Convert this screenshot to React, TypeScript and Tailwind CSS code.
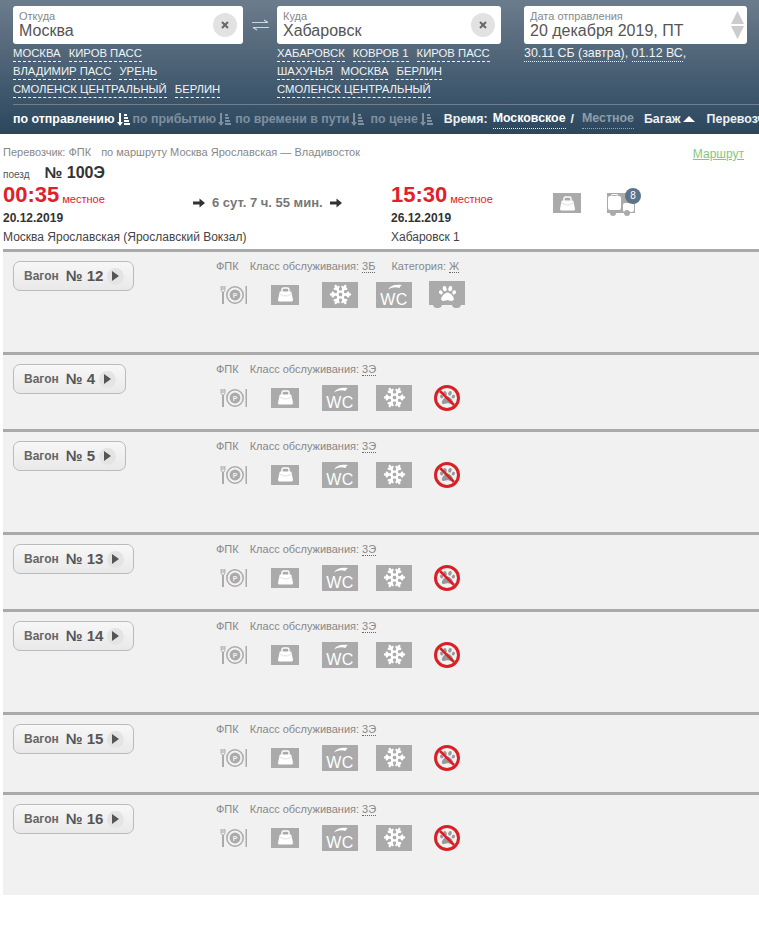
import React from 'react';
import { FaPaw } from 'react-icons/fa';
import { Snowflake } from 'lucide-react';

const fromLinks = [['МОСКВА', 'КИРОВ ПАСС'], ['ВЛАДИМИР ПАСС', 'УРЕНЬ'], ['СМОЛЕНСК ЦЕНТРАЛЬНЫЙ', 'БЕРЛИН']];
const toLinks = [['ХАБАРОВСК', 'КОВРОВ 1', 'КИРОВ ПАСС'], ['ШАХУНЬЯ', 'МОСКВА', 'БЕРЛИН'], ['СМОЛЕНСК ЦЕНТРАЛЬНЫЙ']];

function ClearButton() {
  return (
    <span className="flex h-6 w-6 items-center justify-center rounded-full bg-[#e2e2e2]">
      <svg width="8" height="8" viewBox="0 0 8 8">
        <path d="M1 1l6 6M7 1L1 7" stroke="#666" strokeWidth="2" />
      </svg>
    </span>
  );
}

function CityField({ label, value, width }: { label: string; value: string; width: string }) {
  return (
    <div className={`flex h-[38px] items-center justify-between rounded-[3px] bg-white pl-[6px] pr-[6px] ${width}`}>
      <div>
        <div className="text-[11px] leading-[12px] text-[#888]">{label}</div>
        <div className="text-[16px] leading-[18px] text-[#555]">{value}</div>
      </div>
      <ClearButton />
    </div>
  );
}

function LinkRows({ rows }: { rows: string[][] }) {
  return (
    <div className="mt-[1px]">
      {rows.map((row, i) => (
        <div key={i} className="flex h-[18px] gap-[8px] whitespace-nowrap text-[11.3px] leading-[17px] text-[#f0f3f6]">
          {row.map((t) => (
            <span key={t} className="h-[17px] border-b border-dashed border-[#f0f3f6]">
              {t}
            </span>
          ))}
        </div>
      ))}
    </div>
  );
}

function SortIcon({ color }: { color: string }) {
  return (
    <svg width="13" height="13" viewBox="0 0 13 13" className="ml-[2px] shrink-0" fill={color}>
      <path d="M2 0h2v9h2l-3 4-3-4h2z" />
      <rect x="7" y="1" width="3" height="2" />
      <rect x="7" y="4" width="4" height="2" />
      <rect x="7" y="7" width="5" height="2" />
      <rect x="7" y="10" width="6" height="2" />
    </svg>
  );
}

function Arrow() {
  return (
    <svg width="12" height="10" viewBox="0 0 12 10" fill="#333">
      <path d="M0 3.5h6.5V0.5L12 5l-5.5 4.5v-3H0z" />
    </svg>
  );
}

function BagIcon() {
  return (
    <div className="flex h-[20px] w-[28px] items-center justify-center bg-[#aaa]">
      <svg width="15" height="15" viewBox="0 0 15 15">
        <path d="M4 5V2.5A1.5 1.5 0 0 1 5.5 1h4A1.5 1.5 0 0 1 11 2.5V5" fill="none" stroke="#fff" strokeWidth="1.4" />
        <path d="M2.5 4.5h10a1 1 0 0 1 1 1L15 13a1.5 1.5 0 0 1-1.5 1.5h-12A1.5 1.5 0 0 1 0 13l1.5-7.5a1 1 0 0 1 1-1z" fill="#fff" />
        <path d="M1.5 7l4 1.8h4l4-1.8" fill="none" stroke="#d8d8d8" strokeWidth="0.8" />
      </svg>
    </div>
  );
}

function PlateIcon() {
  return (
    <svg width="27" height="20" viewBox="0 0 27 20" fill="none">
      <path d="M1.8 1v4M3 1v4M4.2 1v4M1 1v4a2 2 0 0 0 4 0V1" stroke="#aaa" strokeWidth="0.8" />
      <rect x="2" y="7" width="2" height="12" fill="#aaa" />
      <circle cx="15" cy="10" r="8.2" stroke="#aaa" strokeWidth="1.5" />
      <circle cx="15" cy="10" r="5.4" fill="#aaa" />
      <text x="15" y="12.5" textAnchor="middle" fontSize="7" fontWeight="700" fill="#f1f1f1">P</text>
      <rect x="25.5" y="1" width="1.5" height="18" fill="#aaa" />
    </svg>
  );
}

function SnowIcon() {
  return (
    <div className="flex h-[26px] w-[36px] items-center justify-center bg-[#aaa]">
      <Snowflake size={23} color="#fff" strokeWidth={2.4} />
    </div>
  );
}

function WcIcon() {
  return (
    <div className="relative h-[26px] w-[36px] bg-[#aaa] text-center text-white">
      <svg width="14" height="6" viewBox="0 0 14 6" className="absolute left-[12px] top-[2px]" fill="#fff">
        <path d="M0 5.5C2 1.5 7 0 14 1c-1.5 .8-2 1.8-2.5 3C8 2.8 4 3.2 0 5.5z" />
      </svg>
      <span className="absolute inset-x-0 top-[9px] text-[16px] leading-[17px] tracking-[0.5px]">WC</span>
    </div>
  );
}

function PetCarIcon() {
  return (
    <div className="relative h-[27px] w-[36px]">
      <div className="flex h-[24px] items-center justify-center bg-[#aaa]">
        <FaPaw size={17} color="#fff" />
      </div>
      <span className="absolute bottom-0 left-[4px] h-[4px] w-[9px] rounded-b-full bg-[#aaa]" />
      <span className="absolute bottom-0 right-[4px] h-[4px] w-[9px] rounded-b-full bg-[#aaa]" />
    </div>
  );
}

function NoPetIcon() {
  return (
    <div className="relative flex h-[26px] w-[26px] items-center justify-center rounded-full border-[3px] border-[#d92027] bg-[#f1f1f1]">
      <FaPaw size={15} color="#999" />
      <svg width="20" height="20" viewBox="0 0 20 20" className="absolute left-0 top-0">
        <path d="M3 3l14 14" stroke="#d92027" strokeWidth="2.5" />
      </svg>
    </div>
  );
}

function LuggageIcon() {
  return (
    <div className="relative h-[28px] w-[34px]">
      <div className="absolute left-0 top-[5px] h-[20px] w-[28px] bg-[#aaa]" />
      <span className="absolute left-[4px] top-[6px] h-[3px] w-[7px] rounded-t-[2px] border border-b-0 border-white" />
      <span className="absolute left-[1px] top-[8px] h-[14px] w-[13px] rounded-[2px] bg-white" />
      <span className="absolute left-[16px] top-[15px] h-[9px] w-[11px] rounded-[2px] bg-white" />
      <span className="absolute bottom-0 left-[3px] h-[6px] w-[6px] rounded-full bg-[#aaa]" />
      <span className="absolute bottom-0 left-[17px] h-[6px] w-[6px] rounded-full bg-[#aaa]" />
      <span className="absolute left-[18px] top-0 flex h-4 w-4 items-center justify-center rounded-full bg-[#5c7389] text-[10px] leading-none text-white">8</span>
    </div>
  );
}

type Car = {
  num: string;
  width: string;
  height: string;
  cls: string;
  category?: string;
  pet?: boolean;
};

const cars: Car[] = [
  { num: '12', width: 'w-[121px]', height: 'h-[103px]', cls: '3Б', category: 'Ж', pet: true },
  { num: '4', width: 'w-[113px]', height: 'h-[77px]', cls: '3Э' },
  { num: '5', width: 'w-[113px]', height: 'h-[103px]', cls: '3Э' },
  { num: '13', width: 'w-[121px]', height: 'h-[77px]', cls: '3Э' },
  { num: '14', width: 'w-[121px]', height: 'h-[103px]', cls: '3Э' },
  { num: '15', width: 'w-[121px]', height: 'h-[80px]', cls: '3Э' },
  { num: '16', width: 'w-[121px]', height: 'h-[103px]', cls: '3Э' },
];

function CarRow({ car }: { car: Car }) {
  return (
    <div className={`ml-[3px] flex border-t-[3px] border-[#aaa] bg-[#f1f1f1] ${car.height}`}>
      <div className="w-[213px] shrink-0 pl-[10px] pt-[9px]">
        <div className={`flex h-[30px] items-center rounded-[7px] border border-[#bbb] bg-gradient-to-b from-[#f7f7f7] to-[#e9e9e9] pl-[10px] ${car.width}`}>
          <span className="text-[12px] font-bold text-[#666]">Вагон</span>
          <span className="ml-[7px] text-[15px] font-bold text-[#555]">№ {car.num}</span>
          <span className="ml-[4px] flex h-[17px] w-[17px] items-center justify-center rounded-full bg-[#e4e4e4]">
            <svg width="7" height="10" viewBox="0 0 7 10" fill="#555">
              <path d="M0 0l7 5-7 5z" />
            </svg>
          </span>
        </div>
      </div>
      <div className="pt-[7px]">
        <div className="flex h-[14px] text-[11px] leading-[14px] text-[#888]">
          <span>ФПК</span>
          <span className="ml-[11px]">Класс обслуживания:</span>
          <span className="ml-[3px] border-b border-dotted border-[#666]">{car.cls}</span>
          {car.category && (
            <>
              <span className="ml-[16px]">Категория:</span>
              <span className="ml-[3px] border-b border-dotted border-[#666]">{car.category}</span>
            </>
          )}
        </div>
        <div className="ml-[4px] mt-[8px] flex h-[27px] items-center">
          <PlateIcon />
          <div className="ml-[24px]">
            <BagIcon />
          </div>
          <div className="ml-[23px]">{car.pet ? <SnowIcon /> : <WcIcon />}</div>
          <div className="ml-[18px]">{car.pet ? <WcIcon /> : <SnowIcon />}</div>
          <div className={car.pet ? 'ml-[17px]' : 'ml-[22px]'}>{car.pet ? <PetCarIcon /> : <NoPetIcon />}</div>
        </div>
      </div>
    </div>
  );
}

export default function App() {
  return (
    <div className="h-[939px] w-[759px] overflow-hidden bg-white font-['Liberation_Sans',Arial,sans-serif]">
      <div className="h-[134px] bg-gradient-to-b from-[#6c7c8c] to-[#2b475e] pl-[13px] pt-[6px]">
        <div className="flex">
          <div>
            <CityField label="Откуда" value="Москва" width="w-[230px]" />
            <LinkRows rows={fromLinks} />
          </div>
          <div className="flex h-[38px] w-[34px] items-center justify-center">
            <svg width="17" height="12" viewBox="0 0 17 12" fill="none" stroke="#d0d7dd" strokeWidth="1.2">
              <path d="M0 3.5h16M12 1l4 2.5M17 8.5H1M5 11L1 8.5" />
            </svg>
          </div>
          <div>
            <CityField label="Куда" value="Хабаровск" width="w-[224px]" />
            <LinkRows rows={toLinks} />
          </div>
          <div className="ml-[23px]">
            <div className="flex h-[38px] w-[223px] items-center justify-between rounded-[3px] bg-white pl-[6px] pr-[3px]">
              <div>
                <div className="text-[11px] leading-[12px] text-[#888]">Дата отправления</div>
                <div className="text-[16px] leading-[18px] text-[#555]">20 декабря 2019, ПТ</div>
              </div>
              <div className="flex flex-col gap-[2px]">
                <svg width="13" height="13" viewBox="0 0 13 13" fill="#ccc"><path d="M6.5 0L13 13H0z" /></svg>
                <svg width="13" height="13" viewBox="0 0 13 13" fill="#ccc"><path d="M0 0h13L6.5 13z" /></svg>
              </div>
            </div>
            <div className="mt-[1px] flex h-[18px] text-[12.4px] leading-[17px] text-[#f0f3f6]">
              <span className="h-[17px] border-b border-dotted border-[#f0f3f6]">30.11 СБ (завтра)</span>
              <span>,&nbsp;</span>
              <span className="h-[17px] border-b border-dotted border-[#f0f3f6]">01.12 ВС</span>
              <span>,</span>
            </div>
          </div>
        </div>
        <div className="mt-[5px] flex h-[29px] items-center whitespace-nowrap border-t border-[#6f8191] text-[12.4px] font-bold">
          <span className="text-white">по отправлению</span>
          <SortIcon color="#fff" />
          <span className="ml-[3px] text-[#7f909e]">по прибытию</span>
          <SortIcon color="#7f909e" />
          <span className="ml-[4px] text-[#7f909e]">по времени в пути</span>
          <SortIcon color="#7f909e" />
          <span className="ml-[6px] text-[#7f909e]">по цене</span>
          <SortIcon color="#7f909e" />
          <span className="ml-[11px] text-[#eef1f4]">Время:</span>
          <span className="ml-[5px] border-b border-dotted border-white text-white">Московское</span>
          <span className="ml-[5px] mr-[8px] text-[#eef1f4]">/</span>
          <span className="border-b border-dotted border-[#9aa8b4] text-[#8e9dab]">Местное</span>
          <span className="ml-[10px] text-[#eef1f4]">Багаж</span>
          <svg width="12" height="6" viewBox="0 0 12 6" fill="#fff" className="ml-[2px] shrink-0"><path d="M6 0l6 6H0z" /></svg>
          <span className="ml-[12px] text-[#eef1f4]">Перевозчик</span>
        </div>
      </div>

      <div className="relative h-[115px] pl-[3px]">
        <a className="absolute right-[15px] top-[11px] text-[12px] text-[#7fc97a] underline">Маршрут</a>
        <div className="pt-[12px] text-[11px] leading-[13px] text-[#888]">
          Перевозчик: ФПК<span className="ml-[10px]">по маршруту Москва Ярославская — Владивосток</span>
        </div>
        <div className="mt-[4px] flex h-[20px] items-center">
          <span className="mt-[3px] text-[10px] text-[#555]">поезд</span>
          <span className="ml-[15px] text-[16px] font-bold text-[#333]">№ 100Э</span>
        </div>
        <div className="mt-[2px] flex">
          <div className="w-[388px]">
            <div className="flex h-[22px] items-end">
              <span className="text-[22px] font-bold leading-[24px] text-[#e3202a]">00:35</span>
              <span className="mb-[1px] ml-[3px] text-[11px] leading-[14px] text-[#e3202a]">местное</span>
            </div>
            <div className="mt-[3px] text-[12px] font-bold leading-[16px] text-[#333]">20.12.2019</div>
            <div className="mt-[3px] text-[12px] leading-[17px] text-[#444]">Москва Ярославская (Ярославский Вокзал)</div>
          </div>
          <div className="w-[162px]">
            <div className="flex h-[22px] items-end">
              <span className="text-[22px] font-bold leading-[24px] text-[#e3202a]">15:30</span>
              <span className="mb-[1px] ml-[3px] text-[11px] leading-[14px] text-[#e3202a]">местное</span>
            </div>
            <div className="mt-[3px] text-[12px] font-bold leading-[16px] text-[#333]">26.12.2019</div>
            <div className="mt-[3px] text-[12px] leading-[17px] text-[#444]">Хабаровск 1</div>
          </div>
          <div className="flex items-start pt-[8px]">
            <BagIcon />
            <div className="ml-[26px] mt-[-5px]">
              <LuggageIcon />
            </div>
          </div>
        </div>
        <div className="absolute left-[193px] top-[59px] flex items-center gap-[7px] text-[13px] font-bold text-[#777]">
          <Arrow />
          <span>6 сут. 7 ч. 55 мин.</span>
          <Arrow />
        </div>
      </div>

      {cars.map((car) => (
        <CarRow key={car.num} car={car} />
      ))}
    </div>
  );
}
